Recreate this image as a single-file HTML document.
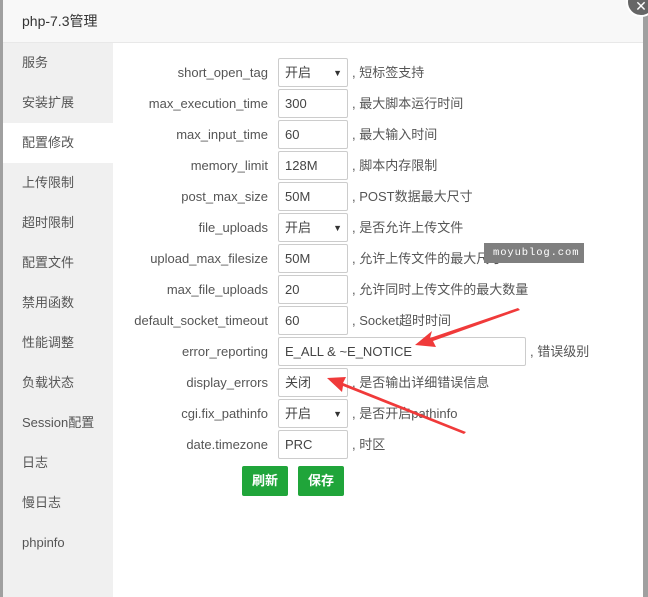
<!DOCTYPE html>
<html><head><meta charset="utf-8"><style>
*{margin:0;padding:0;box-sizing:border-box}
body{width:648px;height:597px;position:relative;overflow:hidden;background:#a0a0a0;font-family:"Liberation Sans","Noto Sans CJK SC",sans-serif;font-size:13px;color:#555}
.dlg{position:absolute;left:3px;top:0;width:640px;height:597px;background:#fff}
.hd{position:absolute;left:0;top:0;width:640px;height:43px;background:#f8f8f8;border-bottom:1px solid #e8e8e8;font-size:14px;color:#333;line-height:43px;padding-left:19px}
.side{position:absolute;left:0;top:43px;width:110px;height:554px;background:#f0f0f0}
.side div{height:40px;line-height:40px;padding-left:19px;color:#555;font-size:13px}
.side .on{background:#fff}
.r{position:absolute;left:0;height:29px;line-height:29px;width:640px}
.l{position:absolute;right:375px;color:#555}
.i{position:absolute;left:275px;top:0;width:70px;height:29px;border:1px solid #ccc;border-radius:2px;padding-left:6px;color:#444;background:#fff;line-height:28px}
.c{position:absolute;left:349px;color:#555}
.sel::after{content:"▼";position:absolute;right:5px;top:0;font-size:9px;color:#333}
.btn{position:absolute;top:466px;height:30px;width:46px;background:#20a53a;color:#fff;border-radius:2px;text-align:center;line-height:30px;font-weight:bold}
.wm{position:absolute;left:484px;top:243px;width:100px;height:20px;background:#7f7f7f;color:#fff;font-family:"Liberation Mono",monospace;font-size:10.5px;line-height:20px;padding-left:9px;letter-spacing:0.9px;white-space:nowrap;overflow:hidden}
</style></head><body>
<div class="dlg">
<div class="hd">php-7.3管理</div>
<div class="side">
<div>服务</div><div>安装扩展</div><div class="on">配置修改</div><div>上传限制</div><div>超时限制</div><div>配置文件</div><div>禁用函数</div><div>性能调整</div><div>负载状态</div><div>Session配置</div><div>日志</div><div>慢日志</div><div>phpinfo</div>
</div>
<div class="r" style="top:58px"><span class="l">short_open_tag</span><span class="i sel">开启</span><span class="c">, 短标签支持</span></div>
<div class="r" style="top:89px"><span class="l">max_execution_time</span><span class="i">300</span><span class="c">, 最大脚本运行时间</span></div>
<div class="r" style="top:120px"><span class="l">max_input_time</span><span class="i">60</span><span class="c">, 最大输入时间</span></div>
<div class="r" style="top:151px"><span class="l">memory_limit</span><span class="i">128M</span><span class="c">, 脚本内存限制</span></div>
<div class="r" style="top:182px"><span class="l">post_max_size</span><span class="i">50M</span><span class="c">, POST数据最大尺寸</span></div>
<div class="r" style="top:213px"><span class="l">file_uploads</span><span class="i sel">开启</span><span class="c">, 是否允许上传文件</span></div>
<div class="r" style="top:244px"><span class="l">upload_max_filesize</span><span class="i">50M</span><span class="c">, 允许上传文件的最大尺寸</span></div>
<div class="r" style="top:275px"><span class="l">max_file_uploads</span><span class="i">20</span><span class="c">, 允许同时上传文件的最大数量</span></div>
<div class="r" style="top:306px"><span class="l">default_socket_timeout</span><span class="i">60</span><span class="c">, Socket超时时间</span></div>
<div class="r" style="top:337px"><span class="l">error_reporting</span><span class="i" style="width:248px">E_ALL &amp; ~E_NOTICE</span><span class="c" style="left:527px">, 错误级别</span></div>
<div class="r" style="top:368px"><span class="l">display_errors</span><span class="i sel">关闭</span><span class="c">, 是否输出详细错误信息</span></div>
<div class="r" style="top:399px"><span class="l">cgi.fix_pathinfo</span><span class="i sel">开启</span><span class="c">, 是否开启pathinfo</span></div>
<div class="r" style="top:430px"><span class="l">date.timezone</span><span class="i">PRC</span><span class="c">, 时区</span></div>
<div class="btn" style="left:239px">刷新</div>
<div class="btn" style="left:295px">保存</div>
</div>
<div class="wm">moyublog.com</div>
<div style="position:absolute;left:626px;top:-13px;width:30px;height:30px;border-radius:50%;background:#666;border:2px solid #fff;color:#fff;font-size:14px;text-align:center;line-height:34px">✕</div>
<svg width="648" height="597" style="position:absolute;left:0;top:0">
<polygon fill="#f03a3a" points="518,308 430,338 432,331 415,345 436,347 433,341 520,310"/>
<polygon fill="#f03a3a" points="466,432 343,383 346,377 327,378 342,392 343,386 464,434"/>
</svg>
</body></html>
